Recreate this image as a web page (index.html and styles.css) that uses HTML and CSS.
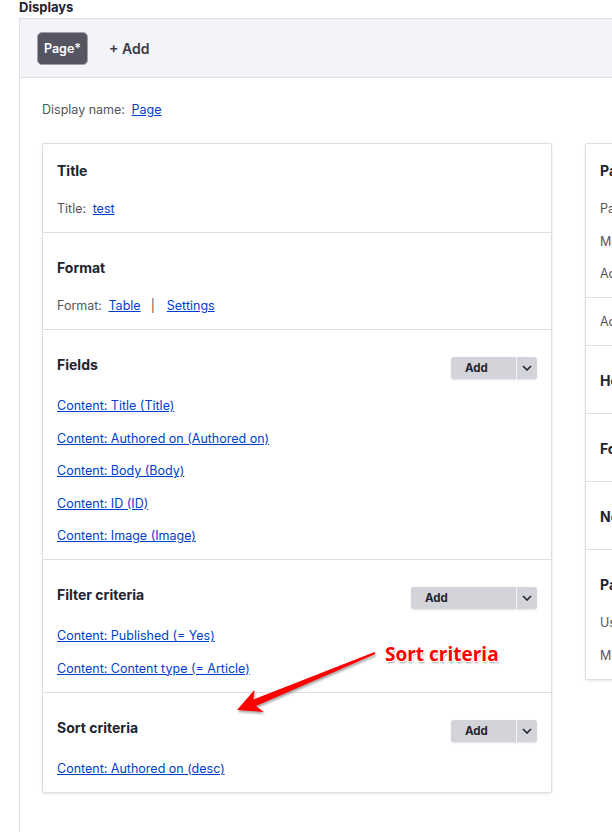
FILE: index.html
```html
<!DOCTYPE html>
<html>
<head>
<meta charset="utf-8">
<link rel="stylesheet" href="styles.css">
</head>
<body>
<div class="page">
  <h2 class="displays-title">Displays</h2>
  <div class="displays">
    <div class="tabs">
      <span class="tab tab-active">Page*</span>
      <span class="tab-add">+ Add</span>
    </div>
    <div class="display-body">
      <div class="display-name"><span class="label">Display name:</span> <a href="#">Page</a></div>
      <div class="columns">
        <div class="card card-main">
          <div class="section section-first">
            <div class="sec-head"><h3>Title</h3></div>
            <div class="rows">
              <div class="row"><span class="label">Title:</span> <a href="#">test</a></div>
            </div>
          </div>
          <div class="section">
            <div class="sec-head"><h3>Format</h3></div>
            <div class="rows">
              <div class="row"><span class="label">Format:</span> <a href="#">Table</a><span class="sep">|</span><a href="#">Settings</a></div>
            </div>
          </div>
          <div class="section">
            <div class="sec-head sec-head-btn"><h3>Fields</h3>
              <div class="dropbtn"><span class="dropbtn-main">Add</span><span class="dropbtn-toggle"><svg width="10" height="6" viewBox="0 0 10 6"><path d="M1 1l4 4 4-4" fill="none" stroke="#222330" stroke-width="1.6"/></svg></span></div>
            </div>
            <div class="rows">
              <div class="row"><a href="#">Content: Title (Title)</a></div>
              <div class="row"><a href="#">Content: Authored on (Authored on)</a></div>
              <div class="row"><a href="#">Content: Body (Body)</a></div>
              <div class="row"><a href="#">Content: ID (ID)</a></div>
              <div class="row"><a href="#">Content: Image (Image)</a></div>
            </div>
          </div>
          <div class="section">
            <div class="sec-head sec-head-btn"><h3>Filter criteria</h3>
              <div class="dropbtn dropbtn-wide"><span class="dropbtn-main">Add</span><span class="dropbtn-toggle"><svg width="10" height="6" viewBox="0 0 10 6"><path d="M1 1l4 4 4-4" fill="none" stroke="#222330" stroke-width="1.6"/></svg></span></div>
            </div>
            <div class="rows">
              <div class="row"><a href="#">Content: Published (= Yes)</a></div>
              <div class="row"><a href="#">Content: Content type (= Article)</a></div>
            </div>
          </div>
          <div class="section">
            <div class="sec-head sec-head-btn"><h3>Sort criteria</h3>
              <div class="dropbtn"><span class="dropbtn-main">Add</span><span class="dropbtn-toggle"><svg width="10" height="6" viewBox="0 0 10 6"><path d="M1 1l4 4 4-4" fill="none" stroke="#222330" stroke-width="1.6"/></svg></span></div>
            </div>
            <div class="rows">
              <div class="row"><a href="#">Content: Authored on (desc)</a></div>
            </div>
          </div>
        </div>
        <div class="card card-side">
          <div class="section section-first">
            <div class="sec-head"><h3>Page settings</h3></div>
            <div class="rows">
              <div class="row"><span class="label">Path:</span> <a href="#">/test</a></div>
              <div class="row"><span class="label">Menu:</span> <a href="#">No menu</a></div>
              <div class="row"><span class="label">Access:</span> <a href="#">Permission</a></div>
            </div>
          </div>
          <div class="section section-row">
            <div class="rows">
              <div class="row"><span class="label">Access:</span> <a href="#">None</a></div>
            </div>
          </div>
          <div class="section section-head-only">
            <div class="sec-head"><h3>Header</h3></div>
          </div>
          <div class="section section-head-only">
            <div class="sec-head"><h3>Footer</h3></div>
          </div>
          <div class="section section-head-only">
            <div class="sec-head"><h3>No results behavior</h3></div>
          </div>
          <div class="section">
            <div class="sec-head"><h3>Pager</h3></div>
            <div class="rows">
              <div class="row"><span class="label">Use pager:</span> <a href="#">Display all items</a></div>
              <div class="row"><span class="label">More link:</span> <a href="#">No</a></div>
            </div>
          </div>
        </div>
      </div>
    </div>
  </div>
  <div class="annotation">
    <svg class="arrow" width="160" height="80" viewBox="225 640 160 80">
      <polygon points="237,710 254.6,689.7 253.3,699.5 374.6,652.1 375.4,653.9 255.9,705.9 263.8,711.9" fill="#ff0000"/>
    </svg>
    <span class="note">Sort criteria</span>
  </div>
</div>
</body>
</html>
```

FILE: styles.css
```css
html, body {
  margin: 0;
  padding: 0;
  overflow: hidden;
  background: #ffffff;
}

.page {
  position: relative;
  width: 612px;
  height: 832px;
  overflow: hidden;
  font-family: Inter, "Liberation Sans", sans-serif;
  color: #222330;
}

.displays-title {
  margin: 0;
  padding-left: 19px;
  height: 18px;
  font-size: 13px;
  line-height: 14px;
  font-weight: 700;
  color: #222330;
}

.displays {
  margin-left: 19px;
  width: 700px;
  height: 900px;
  border: 1px solid #dedfe4;
  border-right: none;
  background: #ffffff;
}

.tabs {
  display: flex;
  align-items: center;
  gap: 21px;
  height: 58px;
  padding-left: 17px;
  background: #f3f4f9;
  border-bottom: 1px solid #dedfe4;
}

.tab-active {
  display: flex;
  align-items: center;
  justify-content: center;
  width: 51px;
  height: 33px;
  box-sizing: border-box;
  border-radius: 5px;
  background: #545560;
  border: 1px solid #9fa0a8;
  color: #ffffff;
  font-size: 12.5px;
  font-weight: 600;
}

.tab-add {
  font-size: 14px;
  font-weight: 600;
  color: #3b3c44;
}

.display-body {
  padding: 22px 0 0 22px;
}

.display-name {
  font-size: 12.5px;
  line-height: 20px;
  margin-bottom: 23px;
}

.label {
  color: #55565b;
  margin-right: 3px;
}

a {
  color: #003ecc;
  text-decoration: underline;
}

.columns {
  display: flex;
  gap: 33px;
  align-items: flex-start;
}

.card {
  width: 510px;
  flex: none;
  box-sizing: border-box;
  border: 1px solid #dedfe4;
  border-radius: 2px;
  background: #ffffff;
  box-shadow: 0 1px 3px rgba(0, 0, 0, 0.1);
}

.section {
  padding: 24px 14px 13px 14px;
  border-top: 1px solid #dedfe4;
}

.section-first {
  border-top: none;
  padding-top: 16px;
}

.section-row {
  padding-top: 14px;
}

.section-head-only {
  padding-bottom: 21px;
}

.sec-head {
  display: flex;
  justify-content: space-between;
  align-items: flex-start;
  height: 22px;
}

.sec-head-btn {
  height: 25px;
}

.sec-head h3 {
  margin: 0;
  font-size: 14px;
  line-height: 21px;
  font-weight: 700;
  color: #222330;
}

.rows {
  display: flex;
  flex-direction: column;
  gap: 12.5px;
  margin-top: 17px;
}

.section-row .rows {
  margin-top: 0;
}

.row {
  font-size: 12.5px;
  line-height: 20px;
}

.sep {
  margin: 0 12px 0 10px;
  color: #55565b;
}

.dropbtn {
  display: flex;
  margin-top: 3px;
  height: 22px;
  width: 86px;
  border-radius: 3px;
  overflow: hidden;
  background: #d3d4d9;
  box-shadow: 0 1px 2px rgba(0, 0, 0, 0.12);
}

.dropbtn-wide {
  width: 126px;
}

.dropbtn-main {
  flex: 1;
  padding-left: 14px;
  font-size: 11.5px;
  line-height: 22px;
  font-weight: 700;
  color: #222330;
  border-right: 1px solid #f3f4f9;
}

.dropbtn-toggle {
  display: flex;
  align-items: center;
  justify-content: center;
  width: 20px;
}

.annotation {
  position: absolute;
  left: 0;
  top: 0;
}

.arrow {
  position: absolute;
  left: 225px;
  top: 640px;
  filter: drop-shadow(1px 2px 1px rgba(0, 0, 0, 0.35));
}

.note {
  position: absolute;
  left: 385px;
  top: 641px;
  white-space: nowrap;
  font-family: "Open Sans", sans-serif;
  font-size: 19px;
  line-height: 26px;
  font-weight: 700;
  color: #ff0000;
  text-shadow: 0 0 1px #ffffff, 1px 1px 0 #ffffff, -1px -1px 0 #ffffff, 1px -1px 0 #ffffff, -1px 1px 0 #ffffff, 1px 2px 2px rgba(0, 0, 0, 0.4);
}
```
